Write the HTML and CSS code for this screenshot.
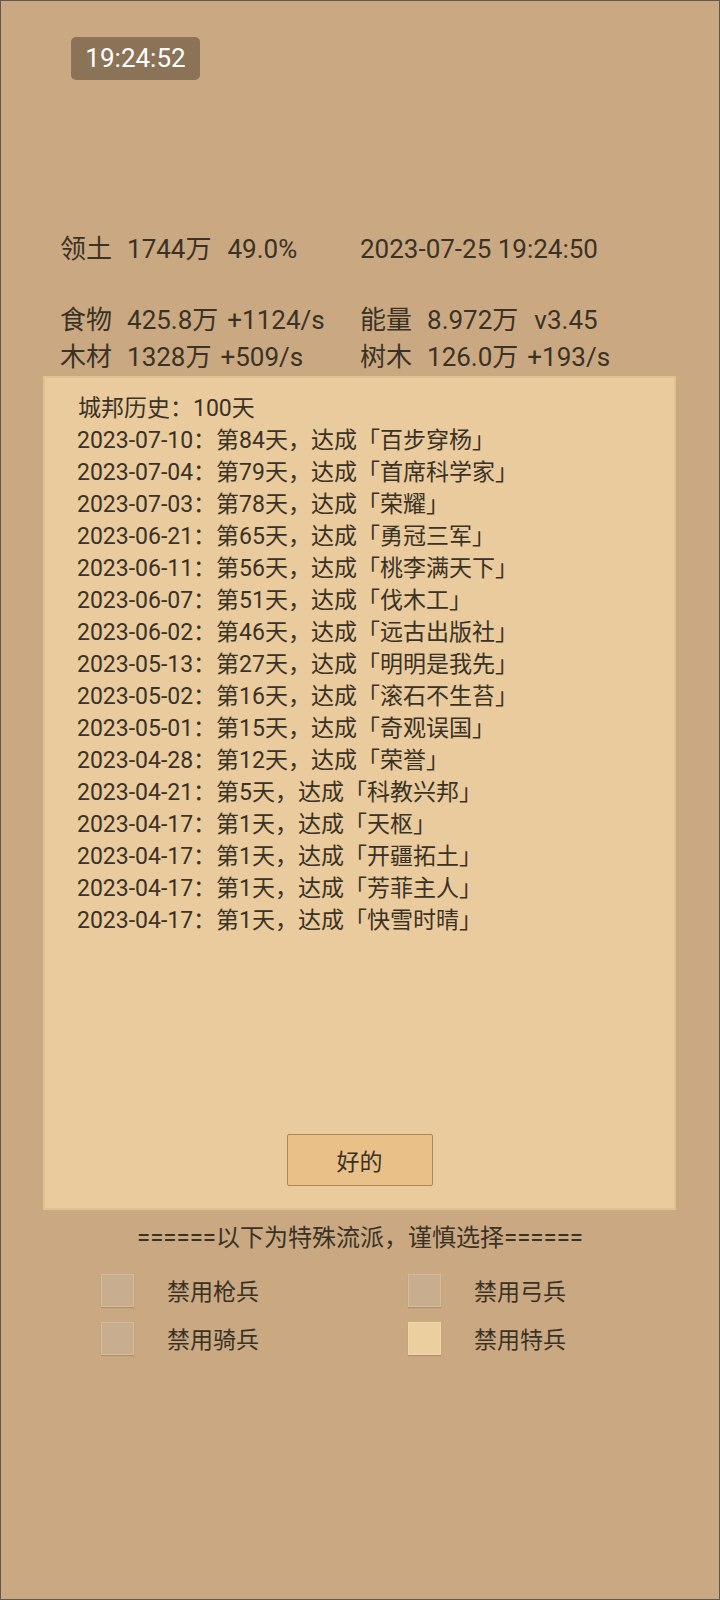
FILE: index.html
```html
<!DOCTYPE html>
<html lang="zh-CN">
<head>
    <meta charset="UTF-8">
    <meta name="viewport" content="width=device-width, initial-scale=1.0">
    <title>城邦</title>
    <link rel="stylesheet" href="styles.css">
</head>
<body>
    <div class="page">
        <div class="top">
            <span class="clock">19:24:52</span>
        </div>

        <div class="stats">
            <div class="row first">
                <div class="cell"><span class="label">领土</span><span>1744万</span><span class="extra wide">49.0%</span></div>
                <div class="cell"><span>2023-07-25 19:24:50</span></div>
            </div>
            <div class="row">
                <div class="cell"><span class="label">食物</span><span>425.8万</span><span class="extra">+1124/s</span></div>
                <div class="cell"><span class="label">能量</span><span>8.972万</span><span class="extra wide">v3.45</span></div>
            </div>
            <div class="row">
                <div class="cell"><span class="label">木材</span><span>1328万</span><span class="extra">+509/s</span></div>
                <div class="cell"><span class="label">树木</span><span>126.0万</span><span class="extra">+193/s</span></div>
            </div>
        </div>

        <div class="dialog">
            <ul class="history">
                <li class="head">城邦历史：100天</li>
                <li>2023-07-10：第84天，达成「百步穿杨」</li>
                <li>2023-07-04：第79天，达成「首席科学家」</li>
                <li>2023-07-03：第78天，达成「荣耀」</li>
                <li>2023-06-21：第65天，达成「勇冠三军」</li>
                <li>2023-06-11：第56天，达成「桃李满天下」</li>
                <li>2023-06-07：第51天，达成「伐木工」</li>
                <li>2023-06-02：第46天，达成「远古出版社」</li>
                <li>2023-05-13：第27天，达成「明明是我先」</li>
                <li>2023-05-02：第16天，达成「滚石不生苔」</li>
                <li>2023-05-01：第15天，达成「奇观误国」</li>
                <li>2023-04-28：第12天，达成「荣誉」</li>
                <li>2023-04-21：第5天，达成「科教兴邦」</li>
                <li>2023-04-17：第1天，达成「天枢」</li>
                <li>2023-04-17：第1天，达成「开疆拓土」</li>
                <li>2023-04-17：第1天，达成「芳菲主人」</li>
                <li>2023-04-17：第1天，达成「快雪时晴」</li>
            </ul>
            <div class="actions">
                <button class="ok">好的</button>
            </div>
        </div>

        <p class="divider">======以下为特殊流派，谨慎选择======</p>

        <div class="options">
            <label class="option"><span class="box"></span>禁用枪兵</label>
            <label class="option"><span class="box"></span>禁用弓兵</label>
            <label class="option"><span class="box"></span>禁用骑兵</label>
            <label class="option"><span class="box checked"></span>禁用特兵</label>
        </div>
    </div>
</body>
</html>
```

FILE: styles.css
```css
html, body {
    margin: 0;
    padding: 0;
}
body {
    font-family: Roboto, "Noto Sans CJK SC", sans-serif;
    color: #3b3226;
    background-color: #caa982;
}
.page {
    box-sizing: border-box;
    height: 1600px;
    border: 1px solid #5c5853;
    background-color: #caa982;
}
.top {
    padding: 36px 0 0 70px;
    height: 194px;
}
.clock {
    display: inline-block;
    width: 129px;
    height: 43px;
    line-height: 43px;
    text-align: center;
    font-size: 26px;
    color: #fff;
    background-color: #8a7357;
    border-radius: 5px;
}
.stats {
    padding: 0 60px 0 59px;
    font-size: 26px;
}
.row {
    display: grid;
    grid-template-columns: 300px 300px;
    line-height: 37px;
}
.row.first {
    margin-bottom: 34px;
}
.label {
    margin-right: 15px;
}
.extra {
    margin-left: 9px;
}
.extra.wide {
    margin-left: 16px;
}
.dialog {
    box-sizing: border-box;
    display: flex;
    flex-direction: column;
    height: 834px;
    margin: 0 43px 0 42px;
    border: 2px solid #dfc292;
    background-color: #e9cb9d;
}
.history {
    flex: 1;
    list-style: none;
    margin: 0;
    padding: 15px 0 0 32px;
    font-size: 23px;
    line-height: 32px;
}
.history .head {
    padding-left: 1px;
}
.actions {
    display: flex;
    justify-content: center;
    padding-bottom: 22px;
}
.ok {
    width: 146px;
    height: 52px;
    font-family: inherit;
    font-size: 23px;
    color: #3b3226;
    background-color: #e8c088;
    border: 1px solid #a9865c;
    border-radius: 2px;
}
.divider {
    margin: 12px 0 0;
    text-align: center;
    font-size: 24px;
    line-height: 32px;
}
.options {
    display: grid;
    grid-template-columns: 307px 1fr;
    row-gap: 14px;
    padding: 19px 0 0 100px;
    font-size: 23px;
}
.option {
    display: flex;
    align-items: center;
    gap: 33px;
}
.box {
    box-sizing: border-box;
    width: 33px;
    height: 33px;
    border: 1px solid #d6bc9c;
    background-color: #c9ad8f;
    box-shadow: 0 1px 1px rgba(90, 70, 40, 0.25);
}
.box.checked {
    background-color: #ebcf9f;
    border-color: #f0d6aa;
}
```
